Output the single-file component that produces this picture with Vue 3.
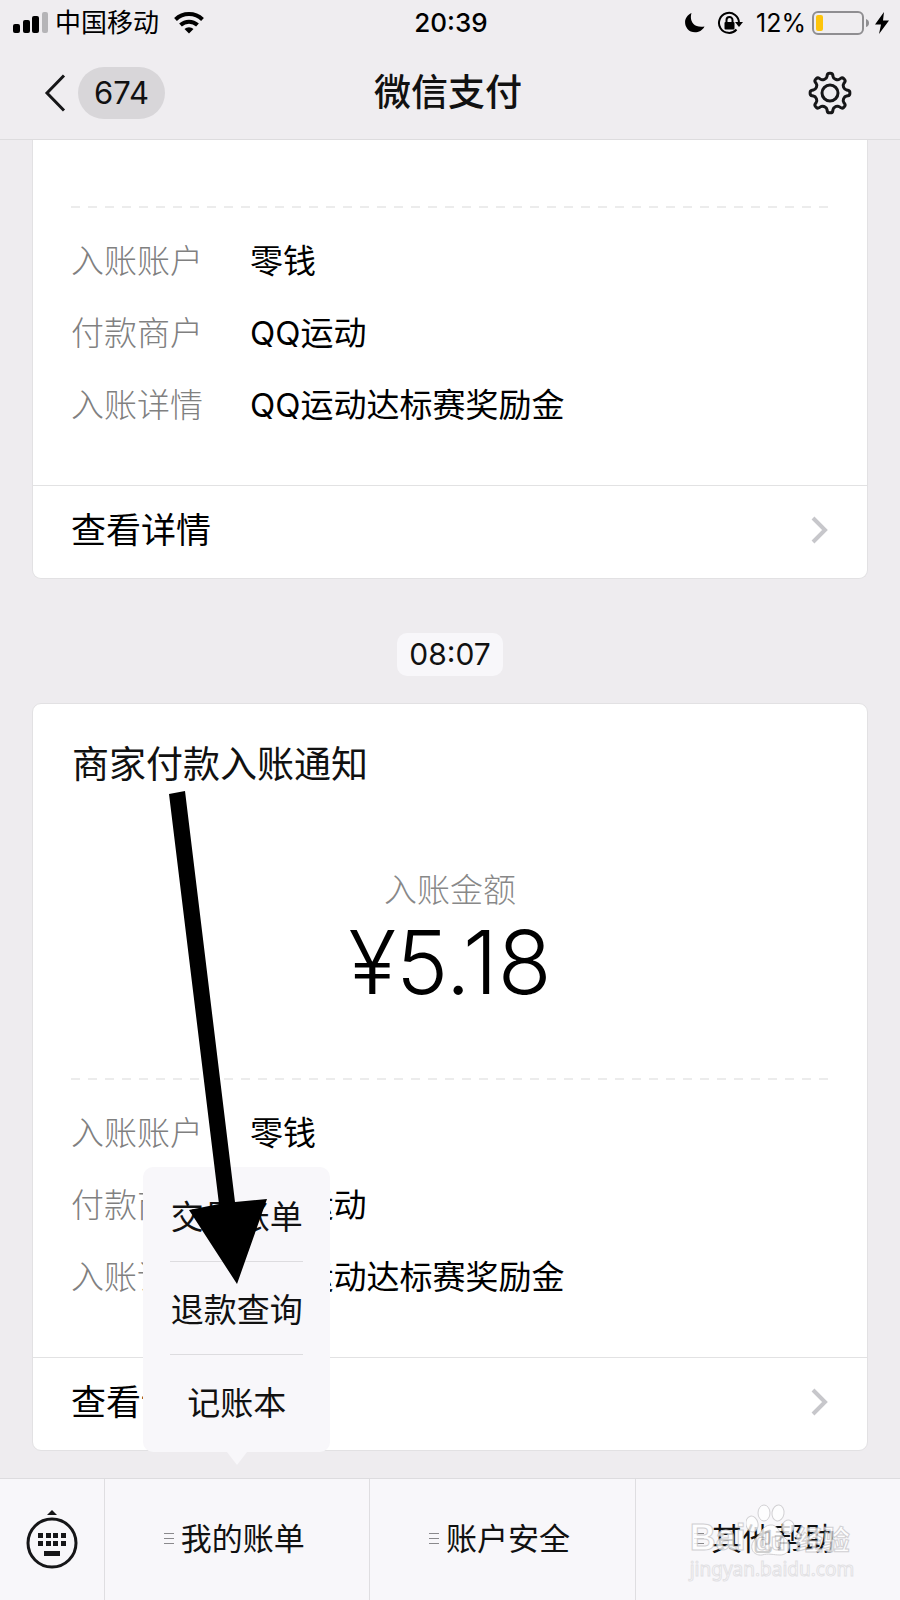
<script setup>
const entries = [
  { label: '入账账户', value: '零钱' },
  { label: '付款商户', value: 'QQ运动' },
  { label: '入账详情', value: 'QQ运动达标赛奖励金' },
]
const tabs = ['我的账单', '账户安全', '其他帮助']
const menu = ['交易账单', '退款查询', '记账本']

// Outline of an eight-tooth cog with softened corners.
function cogPath(c, outer, inner) {
  const pts = []
  for (let i = 0; i < 8; i++) {
    for (const [d, r] of [[-13, inner], [-7, outer], [7, outer], [13, inner]]) {
      const a = ((i * 45 + d - 90) * Math.PI) / 180
      pts.push([c + r * Math.cos(a), c + r * Math.sin(a)])
    }
  }
  const mix = (p, q, d) => {
    const t = d / Math.hypot(q[0] - p[0], q[1] - p[1])
    return [p[0] + (q[0] - p[0]) * t, p[1] + (q[1] - p[1]) * t].map((n) => n.toFixed(2)).join(' ')
  }
  return pts
    .map((p, i) => {
      const prev = pts[(i + pts.length - 1) % pts.length]
      const next = pts[(i + 1) % pts.length]
      return `${i ? 'L' : 'M'}${mix(p, prev, 2)}Q${p[0].toFixed(2)} ${p[1].toFixed(2)} ${mix(p, next, 2)}`
    })
    .join('') + 'Z'
}
const cog = cogPath(22, 20, 15)
</script>

<template>
  <div class="page">
    <header class="top">
      <div class="status">
        <div class="side">
          <svg class="signal" width="36" height="24" viewBox="0 0 36 24">
            <rect x="0" y="13" width="7" height="9" rx="2" />
            <rect x="10" y="9" width="7" height="13" rx="2" />
            <rect x="19" y="5" width="7" height="17" rx="2" />
            <rect x="29" y="1" width="6" height="21" rx="2" fill="#b5b4b7" />
          </svg>
          <span class="carrier">中国移动</span>
          <svg class="wifi" width="32" height="24" viewBox="0 0 32 24" fill="none" stroke="#000" stroke-width="4">
            <path d="M2.5 8.5A19.500 19.500 0 0 1 29.500 8.500" />
            <path d="M7.500 14A12.500 12.500 0 0 1 24.500 14" />
            <path d="M16 22.500L11.500 18A6.500 6.500 0 0 1 20.500 18Z" fill="#000" stroke="none" />
          </svg>
        </div>
        <time class="clock">20:39</time>
        <div class="side right">
          <svg width="22" height="22" viewBox="0 0 22 22">
            <path d="M7.500 1C5 9 10 16.500 20.500 14.500C17 21.500 7.500 22 3.500 17C-1 11 1 4 7.500 1Z" />
          </svg>
          <svg class="lock" width="26" height="26" viewBox="0 0 26 26" fill="none" stroke="#000" stroke-width="2">
            <path d="M19.500 19.500A10 10 0 1 1 22 13" />
            <path d="M18 12H26L22 17Z" fill="#000" stroke="none" />
            <rect x="7.500" y="12" width="10" height="7.500" rx="1" fill="#000" stroke="none" />
            <path d="M9.500 12V10A3 3 0 0 1 15.500 10V12" />
          </svg>
          <span class="percent">12%</span>
          <svg class="battery" width="57" height="26" viewBox="0 0 57 26">
            <rect x="1" y="2" width="50" height="22" rx="5" fill="none" stroke="#8f8e91" stroke-width="2" />
            <rect x="4" y="5" width="7" height="16" rx="2" fill="#fdc40b" />
            <path d="M54 9Q57 10 57 13T54 17Z" fill="#8f8e91" />
          </svg>
          <svg width="14" height="24" viewBox="0 0 14 24"><path d="M9 1L0 13.500H6L4 23L14 9.500H8Z" /></svg>
        </div>
      </div>
      <div class="nav">
        <button class="back" type="button" aria-label="返回">
          <svg width="22" height="38" viewBox="0 0 22 38" fill="none" stroke="#161618" stroke-width="3">
            <path d="M20 1.500L3 19L20 36.500" />
          </svg>
          <span class="unread">674</span>
        </button>
        <h1>微信支付</h1>
        <button class="settings" type="button" aria-label="设置">
          <svg width="44" height="44" viewBox="0 0 44 44" fill="none" stroke="#161618" stroke-width="3">
            <path :d="cog" />
            <circle cx="22" cy="22" r="8" />
          </svg>
        </button>
      </div>
    </header>

    <main>
      <article class="card first">
        <dl class="entries">
          <div v-for="e in entries" :key="e.label"><dt>{{ e.label }}</dt><dd>{{ e.value }}</dd></div>
        </dl>
        <a class="more" href="#">
          查看详情
          <svg width="18" height="28" viewBox="0 0 18 28" fill="none" stroke="#c7c7cb" stroke-width="4">
            <path d="M2 2L14 14L2 26" />
          </svg>
        </a>
      </article>

      <time class="stamp">08:07</time>

      <article class="card">
        <h2>商家付款入账通知</h2>
        <p class="caption">入账金额</p>
        <p class="amount">¥5.18</p>
        <dl class="entries">
          <div v-for="e in entries" :key="e.label"><dt>{{ e.label }}</dt><dd>{{ e.value }}</dd></div>
        </dl>
        <a class="more" href="#">
          查看详情
          <svg width="18" height="28" viewBox="0 0 18 28" fill="none" stroke="#c7c7cb" stroke-width="4">
            <path d="M2 2L14 14L2 26" />
          </svg>
        </a>
        <svg class="pointer" width="100" height="494" viewBox="0 0 100 494">
          <path d="M0 3L16 0L66 411L98 408L68 493L20 419L50 413Z" />
        </svg>
      </article>
    </main>

    <footer class="tabs">
      <button class="keyboard" type="button" aria-label="键盘">
        <svg width="52" height="60" viewBox="0 0 52 60" fill="#161618">
          <path d="M21 5L26 0L31 5Z" />
          <circle cx="26" cy="33" r="24" fill="none" stroke="#161618" stroke-width="3" />
          <path d="M12 23h5v5h-5zM20 23h5v5h-5zM27 23h5v5h-5zM35 23h5v5h-5zM12 31h5v5h-5zM20 31h5v5h-5zM27 31h5v5h-5zM35 31h5v5h-5zM18 41h16v5H18z" />
        </svg>
      </button>
      <div v-for="(tab, i) in tabs" :key="tab" class="tab">
        <button type="button">
          <svg width="10" height="14" viewBox="0 0 10 14" stroke="#8a898c"><path d="M0 1.500H10M0 6.500H10M0 11.500H10" /></svg>
          {{ tab }}
        </button>
        <div v-if="i === 0" class="menu">
          <button v-for="m in menu" :key="m" type="button">{{ m }}</button>
        </div>
        <div v-if="i === 2" class="mark">
          <div class="brand">
            <span class="latin">Bai</span>
            <svg width="50" height="54" viewBox="0 0 50 54" fill="#fff" stroke="#c8c7ca">
              <ellipse cx="18" cy="10" rx="6" ry="8" />
              <ellipse cx="32" cy="10" rx="6" ry="8" transform="rotate(8 32 10)" />
              <ellipse cx="6" cy="21" rx="6" ry="8" transform="rotate(-12 6 21)" />
              <ellipse cx="42" cy="24" rx="6" ry="7" transform="rotate(14 42 24)" />
              <path d="M24 22C32 21 33 30 39 35C47 42 43 52 34 52C28 52 22 50 16 52C7 53 2 44 9 36C15 31 16 23 24 22Z" />
              <text x="10" y="47" class="du">du</text>
            </svg>
            <span class="han">经验</span>
          </div>
          <span class="site">jingyan.baidu.com</span>
        </div>
      </div>
    </footer>
  </div>
</template>

<style>
body {
  background: #eeecef;
}
</style>

<style scoped>
.page {
  display: flex;
  flex-direction: column;
  min-height: 100vh;
  font-family: Inter, "Noto Sans CJK SC", sans-serif;
  color: #111;
}
svg {
  display: block;
  flex: none;
}
button {
  border: 0;
  padding: 0;
  background: none;
  font: inherit;
  color: inherit;
}
h1, h2, p, dl, dd {
  margin: 0;
  font-weight: 400;
}
.top {
  background: #efedf0;
  border-bottom: 1px solid #dddcde;
}
.status {
  display: grid;
  grid-template-columns: 1fr auto 1fr;
  align-items: center;
  height: 46px;
  padding: 0 11px 0 13px;
  font-size: 26px;
  line-height: 40px;
  color: #000;
}
.side {
  display: flex;
  align-items: center;
}
.carrier {
  margin: 0 14px 0 6px;
}
.right {
  justify-content: flex-end;
}
.clock {
  font-weight: 500;
}
.lock {
  margin-left: 11px;
}
.percent {
  margin: 0 6px 0 13px;
  font-size: 25px;
}
.battery {
  margin-right: 6px;
}
.nav {
  display: grid;
  grid-template-columns: 1fr auto 1fr;
  align-items: center;
  height: 93px;
  padding: 0 48px 0 44px;
}
.back {
  display: flex;
  align-items: center;
  gap: 12px;
  justify-self: start;
}
.unread {
  padding: 0 16px;
  border-radius: 26px;
  background: #d8d6d9;
  font-size: 31px;
  line-height: 52px;
}
h1 {
  font-size: 37px;
  font-weight: 500;
  line-height: 52px;
}
.settings {
  justify-self: end;
}
main {
  flex: 1;
  display: flex;
  flex-direction: column;
  padding: 0 32px 27px;
}
.card {
  position: relative;
  border: 1px solid #e2e1e3;
  border-radius: 9px;
  background: #fff;
}
.first {
  padding-top: 66px;
  border-top: 0;
  border-radius: 0 0 9px 9px;
}
h2 {
  padding: 35px 39px 0;
  font-size: 37px;
  line-height: 52px;
}
.caption {
  margin-top: 79px;
  text-align: center;
  font-size: 33px;
  font-weight: 300;
  line-height: 40px;
  color: #888;
}
.amount {
  margin: 2px 0 66px;
  text-align: center;
  font-size: 88px;
  font-weight: 300;
  line-height: 100px;
  color: #000;
}
.entries {
  padding: 19px 38px 44px;
  font-size: 33px;
  line-height: 72px;
  background: repeating-linear-gradient(90deg, #ececec 0 9px, transparent 9px 17px) 38px 0 / calc(100% - 76px) 2px no-repeat;
}
.entries div {
  display: grid;
  grid-template-columns: 179px 1fr;
}
dt {
  font-weight: 300;
  color: #808080;
}
dd {
  color: #000;
}
.more {
  display: flex;
  align-items: center;
  justify-content: space-between;
  height: 93px;
  padding: 0 38px 4px;
  border-top: 1px solid #e2e2e3;
  box-sizing: border-box;
  font-size: 35px;
  line-height: 52px;
  color: #000;
  text-decoration: none;
}
.stamp {
  align-self: center;
  margin: 54px 0 27px;
  padding: 0 12px;
  border-radius: 10px;
  background: #f8f7fa;
  font-size: 30px;
  line-height: 43px;
}
.pointer {
  position: absolute;
  left: 136px;
  top: 87px;
  z-index: 3;
}
.tabs {
  display: grid;
  grid-template-columns: 104px repeat(3, 1fr);
  height: 121px;
  border-top: 1px solid #dddcdf;
  background: #f8f7fa;
}
.keyboard {
  display: grid;
  place-items: center;
}
.tab {
  position: relative;
  display: grid;
  border-left: 1px solid #dfdee1;
  font-size: 31px;
  line-height: 44px;
}
.tab > button {
  display: flex;
  align-items: center;
  justify-content: center;
  gap: 7px;
  padding: 0 6px 2px 0;
}
.menu {
  position: absolute;
  left: 50%;
  bottom: calc(100% + 27px);
  z-index: 2;
  width: 187px;
  margin-left: -94px;
  padding: 1px 27px 5px;
  box-sizing: border-box;
  border-radius: 10px;
  background: #f8f7fa;
  font-size: 33px;
}
.menu::after {
  content: "";
  position: absolute;
  left: 50%;
  top: 100%;
  margin-left: -10px;
  border: 10px solid transparent;
  border-top: 13px solid #f8f7fa;
  border-bottom: 0;
}
.menu button {
  display: block;
  width: 100%;
  height: 93px;
  padding-top: 4px;
  white-space: nowrap;
}
.menu button + button {
  border-top: 1px solid #dddcdf;
}
.mark {
  position: absolute;
  left: 54px;
  top: 24px;
  color: #fff;
  opacity: 0.8;
  pointer-events: none;
}
.brand {
  display: flex;
  align-items: flex-end;
  height: 54px;
  font-weight: 700;
  -webkit-text-stroke: 1px #c8c7ca;
}
.latin {
  font-family: "Liberation Sans", sans-serif;
  font-size: 36px;
  line-height: 38px;
}
.du {
  font-family: "Liberation Sans", sans-serif;
  font-size: 24px;
}
.han {
  font-size: 27px;
  line-height: 32px;
}
.site {
  display: block;
  font-family: "Noto Sans", sans-serif;
  font-size: 19px;
  line-height: 24px;
  -webkit-text-stroke: 1px #dddcdf;
}
</style>
